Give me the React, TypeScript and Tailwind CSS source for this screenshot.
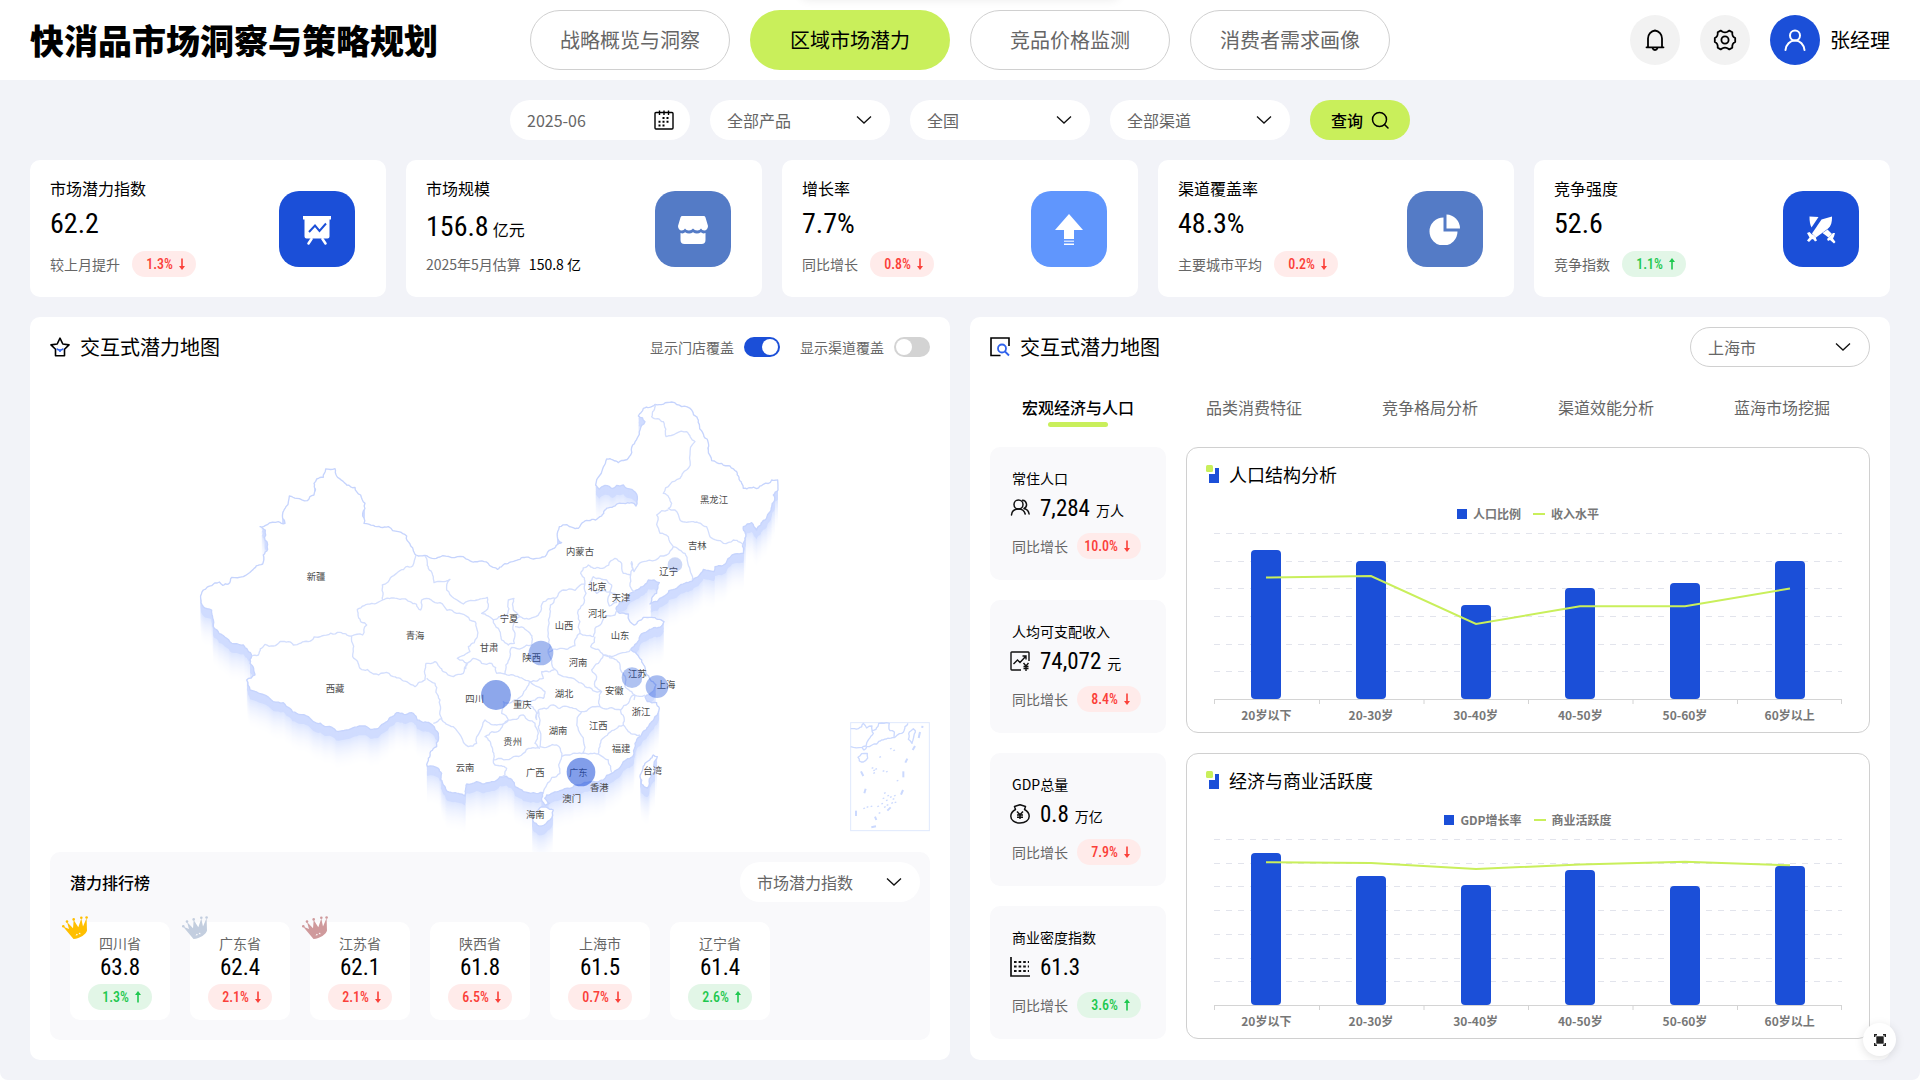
import React from "react";

const NUM = "font-['Roboto_Condensed','Roboto',sans-serif]";

/* ---------- shared pieces ---------- */

function Chevron({ className = "" }: { className?: string }) {
  return (
    <svg className={`pointer-events-none h-2 w-4 ${className}`} viewBox="0 0 16 8" fill="none" stroke="#111" strokeWidth="1.3" aria-hidden="true">
      <path d="M1 0.5 8 7 15 0.5" />
    </svg>
  );
}

function Select({ label, options, className = "" }: { label: string; options: string[]; className?: string }) {
  return (
    <div className={`grid h-10 w-[180px] items-center rounded-full bg-white ${className}`}>
      <select
        aria-label={label}
        className="col-start-1 row-start-1 h-full w-full appearance-none rounded-full bg-transparent pr-10 pl-[17px] text-base text-[#666] outline-none"
      >
        {options.map((o) => (
          <option key={o}>{o}</option>
        ))}
      </select>
      <Chevron className="col-start-1 row-start-1 mr-[18px] justify-self-end" />
    </div>
  );
}

function Badge({ value, up = false }: { value: string; up?: boolean }) {
  return (
    <span
      className={`inline-flex h-[26px] w-16 items-center justify-end gap-[6px] rounded-full pr-[11px] text-sm font-medium ${NUM} ${
        up ? "bg-[#e2f6e7] text-[#1ec84f]" : "bg-[#ffebea] text-[#fb4039]"
      }`}
    >
      {value}
      <svg className={`h-3 w-[6px] ${up ? "rotate-180" : ""}`} viewBox="0 0 6 12" aria-hidden="true">
        <path d="M2.2 0.5h1.6V8H6L3 12 0 8h2.2z" fill="currentColor" />
      </svg>
    </span>
  );
}

/* ---------- KPI cards ---------- */

const kpiIcons: Record<string, React.ReactNode> = {
  board: (
    <>
      <path d="M2 3h28v3.500h-1.500v17a2 2 0 0 1-2 2h-21a2 2 0 0 1-2-2v-17H2z" fill="#fff" />
      <path d="m8 19 6-6.500 4.500 5.500 6.500-7.500" fill="none" stroke="#1b4fd8" strokeWidth="2" />
      <path d="m10.500 26-3 4.500M21.500 26l3 4.500" stroke="#fff" strokeWidth="2.500" strokeLinecap="round" />
    </>
  ),
  store: (
    <>
      <path d="M5.500 3h21a2 2 0 0 1 2 1.400L31 13c0 2.500-1.700 4.500-3.700 4.500-1.500 0-2.500-.8-3.300-2-.8 1.200-2 2-3.700 2-1.800 0-3.300-.8-4.300-2-1 1.200-2.400 2-4.200 2-1.700 0-3-.8-3.800-2-.8 1.200-1.700 2-3.300 2C2.700 17.500 1 15.500 1 13l2.500-8.600A2 2 0 0 1 5.500 3z" fill="#fff" />
      <path d="M3.500 20c2 .8 3.600.3 4.600-.7 2.400 1.700 5.500 1.700 7.900 0 2.400 1.700 5.500 1.700 7.900 0 1 1 2.600 1.500 4.600.7v7a4 4 0 0 1-4 4h-17a4 4 0 0 1-4-4z" fill="#fff" />
    </>
  ),
  arrow: (
    <>
      <path d="M16 1 30 17h-9v9H11v-9H2z" fill="#fff" />
      <path d="M11 27.500h10V29H11z" fill="#fff" opacity=".7" />
      <path d="M11 30.500h10V32H11z" fill="#fff" />
    </>
  ),
  pie: (
    <>
      <path d="M14.500 4.500v14h14A14 14 0 1 1 14.500 4.500z" fill="#fff" />
      <path d="M17.500 1.500A14 14 0 0 1 31 15.500H17.500z" fill="#fff" />
    </>
  ),
  swords: (
    <g fill="#fff">
      <path d="M4.500 3.500 13.500 4l-7 10.500C5 12 4.500 8 4.500 3.500z" />
      <path d="M16.500 6.500 27 3.500c0 5-.5 9.500-4.500 12.500L11 24.500l-4-4z" />
      <path d="M22.500 16.500 27 21l-3.500 3.500-6-4.500z" />
      <path d="m2 20 2.500-1 2.500 2.500h1l3 3v1l1 2-2 1-1.500-2-1.500-.5-3 3-2-1.500 2.500-3zM30 20l-2 0-6 6 1 2 2-1 4 3.500 1.500-1.500-2.500-3.500 1-2z" />
    </g>
  ),
};

type Kpi = { label: string; value: string; unit?: string; note: string; change?: string; up?: boolean; noteValue?: string; icon: string; tint: string };

const kpis: Kpi[] = [
  { label: "市场潜力指数", value: "62.2", note: "较上月提升", change: "1.3%", icon: "board", tint: "bg-[#1b4fd8]" },
  { label: "市场规模", value: "156.8", unit: "亿元", note: "2025年5月估算", noteValue: "150.8 亿", icon: "store", tint: "bg-[#547bc6]" },
  { label: "增长率", value: "7.7%", note: "同比增长", change: "0.8%", icon: "arrow", tint: "bg-[#6096fd]" },
  { label: "渠道覆盖率", value: "48.3%", note: "主要城市平均", change: "0.2%", icon: "pie", tint: "bg-[#547bc6]" },
  { label: "竞争强度", value: "52.6", note: "竞争指数", change: "1.1%", up: true, icon: "swords", tint: "bg-[#1b4fd8]" },
];

function KpiCard({ k }: { k: Kpi }) {
  return (
    <article className="flex h-[137px] items-center justify-between rounded-[10px] bg-white pr-[31px] pl-5">
      <div className="flex h-full flex-col pt-4">
        <h3 className="text-base leading-6 text-black">{k.label}</h3>
        <p className={`flex h-12 items-center gap-1 text-black ${k.unit ? "pt-[6px]" : ""}`}>
          <span className={`text-[28px] leading-none ${NUM}`}>{k.value}</span>
          {k.unit && <span className="pt-1 text-base leading-6">{k.unit}</span>}
        </p>
        <p className="mt-[3px] flex h-[26px] items-center gap-3 text-sm text-[#666]">
          {k.note}
          {k.change && <Badge value={k.change} up={k.up} />}
          {k.noteValue && <span className="-ml-1 text-black">{k.noteValue}</span>}
        </p>
      </div>
      <span className={`flex size-[76px] items-center justify-center rounded-[20px] ${k.tint}`}>
        <svg className="size-8" viewBox="0 0 32 32" aria-hidden="true">
          {kpiIcons[k.icon]}
        </svg>
      </span>
    </article>
  );
}

/* ---------- map ---------- */

type Pt = [number, number];

/* Subdivides a polyline with a small repeatable jitter so borders look hand surveyed. */
function rough(raw: number[], closed = false, amp = 0.16): string {
  let pts: Pt[] = [];
  for (let i = 0; i < raw.length; i += 2) pts.push([raw[i], raw[i + 1]]);
  if (closed) pts.push(pts[0]);
  for (let pass = 0; pass < 3; pass++) {
    const out: Pt[] = [pts[0]];
    for (let i = 1; i < pts.length; i++) {
      const [ax, ay] = pts[i - 1];
      const [bx, by] = pts[i];
      const len = Math.hypot(bx - ax, by - ay);
      if (len > 9) {
        const r = Math.sin(ax * 12.9898 + by * 78.233 + ay * 3.1) * 43758.5453;
        const k = (r - Math.floor(r) - 0.5) * 2 * amp;
        out.push([(ax + bx) / 2 - (by - ay) * k, (ay + by) / 2 + (bx - ax) * k]);
      }
      out.push([bx, by]);
    }
    pts = out;
  }
  return "M" + pts.map((p) => `${p[0].toFixed(1)} ${p[1].toFixed(1)}`).join("L") + (closed ? "Z" : "");
}

const east = (raw: number[]) => raw.map((v, i) => (i % 2 ? v : v + 1140));

const mainland = [
  62, 655, 70, 630, 95, 617, 118, 606, 128, 616, 145, 612, 155, 592, 190, 590, 215, 572, 248, 552, 250, 525, 263, 508, 255, 480, 256, 450, 240, 440,
  262, 434, 295, 425, 315, 430, 308, 415, 318, 380, 328, 348, 350, 355, 382, 362, 402, 345, 402, 310, 410, 297, 430, 292, 437, 267, 465, 266, 470, 288,
  500, 315, 525, 322, 542, 345, 555, 370, 548, 400, 552, 430, 580, 436, 625, 440, 655, 455, 680, 468, 690, 492, 708, 525, 735, 526, 780, 531, 850, 530,
  885, 545, 935, 560, 952, 568, 985, 550, 1020, 538, 1060, 537, 1095, 530, 1115, 508, 1145, 488, 1132, 470, 1138, 440, 1160, 434, 1195, 445, 1225, 422,
  1265, 408, 1290, 382, 1330, 370, 1355, 368, 1368, 378, 1372, 350, 1355, 328, 1330, 315, 1310, 316, 1298, 326, 1275, 316, 1258, 328, 1247, 315, 1260, 285,
  1280, 237, 1315, 248, 1352, 225, 1358, 195, 1380, 150, 1395, 125, 1375, 108, 1390, 85, 1425, 73, 1475, 66, 1505, 80, 1535, 90, 1555, 120, 1572, 170,
  1585, 210, 1595, 242, 1625, 250, 1650, 258, 1670, 275, 1685, 310, 1690, 325, 1730, 326, 1750, 313, 1775, 300, 1793, 300, 1794, 330, 1780, 345, 1775, 380,
  1755, 420, 1730, 450, 1715, 428, 1690, 440, 1695, 480, 1690, 520, 1665, 522, 1640, 545, 1605, 560, 1602, 575, 1570, 568, 1555, 590, 1530, 605, 1490, 625,
  1450, 650, 1410, 672, 1415, 655, 1430, 640, 1438, 608, 1405, 600, 1375, 628, 1350, 640, 1340, 660, 1318, 668, 1308, 685, 1320, 700, 1345, 702, 1350, 725,
  1362, 735, 1390, 712, 1415, 712, 1452, 725, 1440, 742, 1405, 752, 1380, 768, 1370, 790, 1352, 808, 1370, 822, 1385, 840, 1398, 880, 1410, 898, 1428, 915,
  1418, 935, 1395, 950, 1402, 965, 1430, 968, 1438, 985, 1425, 1010, 1405, 1040, 1380, 1070, 1365, 1090, 1362, 1120, 1330, 1145, 1295, 1180, 1270, 1200,
  1230, 1205, 1200, 1215, 1170, 1225, 1140, 1232, 1120, 1238, 1100, 1245, 1094, 1255, 1108, 1270, 1097, 1276, 1085, 1260, 1090, 1238, 1060, 1238, 1030, 1235,
  1005, 1220, 995, 1198, 960, 1190, 935, 1205, 890, 1205, 860, 1212, 855, 1248, 835, 1240, 815, 1238, 790, 1215, 785, 1180, 775, 1165, 742, 1160, 745, 1135,
  770, 1100, 772, 1055, 750, 1030, 712, 1020, 700, 1000, 655, 998, 625, 1020, 595, 1045, 550, 1038, 500, 1050, 440, 1040, 400, 1025, 350, 1000, 310, 968,
  280, 965, 210, 930, 200, 900, 225, 885, 210, 850, 215, 828, 190, 795, 140, 775, 100, 740, 95, 690, 70, 680,
];
const hainan = [1056, 1302, 1080, 1283, 1120, 1290, 1110, 1320, 1085, 1338, 1062, 1328];
const taiwan = [1380, 1190, 1395, 1150, 1420, 1125, 1432, 1130, 1425, 1175, 1402, 1224, 1384, 1212];

const land = [mainland, hainan, taiwan].map((p) => rough(p, true)).join("");

const borders = [
  [708, 525, 698, 558, 660, 572, 625, 605, 607, 615, 608, 660],
  [608, 660, 575, 670, 532, 688, 535, 710, 560, 735, 548, 765, 515, 768, 480, 757, 425, 768, 385, 785, 340, 795, 325, 785, 280, 798, 255, 793, 235, 825, 215, 828],
  [608, 660, 650, 655, 690, 665, 722, 690, 725, 660, 780, 668, 830, 700, 885, 725, 892, 770, 865, 800, 870, 815, 832, 835, 862, 850, 857, 868],
  [515, 768, 518, 830, 540, 865, 580, 882, 640, 890, 680, 905, 705, 920, 735, 900, 738, 850, 765, 845, 790, 875, 820, 890, 850, 880, 860, 850],
  [735, 528, 745, 565, 762, 608, 810, 598, 800, 630, 850, 672, 880, 662, 922, 652, 925, 680, 905, 700, 940, 720],
  [940, 720, 975, 710, 985, 660, 1002, 655, 1000, 690, 1020, 710, 1000, 735, 1005, 760, 1003, 790, 985, 795, 965, 780, 955, 745, 940, 720],
  [1005, 740, 1050, 760, 1055, 795, 995, 802, 990, 830, 975, 882, 950, 880, 935, 850, 905, 850, 880, 835, 862, 850],
  [1020, 710, 1060, 712, 1090, 665, 1125, 655, 1110, 700, 1108, 780, 1105, 820, 1115, 850, 1125, 868, 1085, 875, 1090, 895, 1050, 905, 1000, 885, 975, 882],
  [1125, 655, 1150, 630, 1215, 612],
  east([75, 612, 78, 640, 55, 690, 60, 760, 45, 797, 0, 805, -35, 818]),
  east([75, 612, 62, 580, 85, 555, 120, 565, 165, 535, 185, 550, 190, 580, 212, 585, 210, 610, 225, 635]),
  east([88, 612, 100, 590, 140, 600, 155, 615, 150, 635, 110, 640, 90, 625, 88, 612]),
  east([150, 635, 165, 640, 170, 668, 148, 678, 145, 650, 150, 635]),
  east([60, 760, 100, 770, 105, 745, 135, 710, 165, 705, 175, 690]),
  east([105, 770, 92, 800, 130, 825, 180, 820, 212, 808]),
  east([130, 825, 115, 850, 95, 870, 110, 890, 105, 920, 125, 935]),
  east([130, 825, 170, 840, 190, 880, 195, 920, 215, 935, 225, 945, 222, 960]),
  east([-15, 868, 10, 890, 40, 895, 75, 920, 125, 935, 120, 980, 65, 995, 40, 985, 0, 985, -20, 975, -65, 990, -70, 1020]),
  east([120, 980, 160, 985, 182, 990, 205, 970, 222, 945, 255, 945]),
  east([65, 995, 55, 1050, 68, 1120, 115, 1122, 120, 1100, 145, 1060, 190, 1035, 182, 990]),
  east([190, 1035, 205, 1055, 240, 1065]),
  east([115, 1122, 145, 1140, 155, 1178]),
  [1075, 990, 1075, 1040, 1080, 1100, 1130, 1095, 1145, 1130, 1170, 1125, 1208, 1120],
  [1080, 1105, 1030, 1120, 1000, 1130, 940, 1140, 945, 1155, 980, 1165, 975, 1185, 960, 1190],
  [1145, 1130, 1140, 1180, 1100, 1215, 1090, 1238],
  [940, 1140, 935, 1100, 915, 1070, 960, 1050, 985, 1020, 1030, 1005, 1065, 1030, 1075, 1060, 1065, 1090, 1080, 1105],
  [1070, 1020, 1065, 990, 1050, 975, 1010, 960, 1030, 940, 1050, 905, 1095, 935, 1090, 955, 1050, 965],
  [1010, 960, 970, 965, 965, 1000, 985, 1020],
  [740, 895, 765, 910, 780, 960, 785, 1015, 760, 1030],
  [785, 1015, 820, 1040, 865, 1100, 890, 1090, 915, 1020, 950, 1035, 985, 1020],
  east([285, 73, 275, 110, 310, 125, 318, 170, 380, 155, 405, 185, 385, 265, 360, 295, 310, 340, 335, 370, 325, 385, 345, 390, 360, 420, 400, 425, 440, 440, 450, 470, 490, 490, 520, 480, 555, 500]),
  east([325, 390, 290, 405, 300, 460, 325, 470, 340, 500, 375, 520, 390, 570, 397, 600]),
  east([340, 500, 320, 525, 250, 545, 222, 575, 215, 545, 212, 585]),
]
  .map((b) => rough(b))
  .join("");

const places: [string, number, number][] = [
  ["新疆", 408, 589], ["西藏", 465, 926], ["青海", 705, 768], ["甘肃", 927, 803], ["宁夏", 987, 717], ["陕西", 1055, 834],
  ["山西", 1152, 738], ["四川", 884, 957], ["重庆", 1027, 974], ["湖北", 1152, 940], ["湖南", 1134, 1051], ["贵州", 998, 1085],
  ["云南", 855, 1163], ["广西", 1066, 1178], ["海南", 1066, 1303], ["澳门", 1175, 1255], ["广东", 1195, 1178], ["香港", 1258, 1222],
  ["福建", 1323, 1106], ["江西", 1255, 1037], ["浙江", 1383, 996], ["上海", 1458, 914], ["江苏", 1372, 880], ["安徽", 1303, 932],
  ["河南", 1194, 849], ["山东", 1320, 766], ["河北", 1252, 700], ["天津", 1323, 652], ["北京", 1252, 620], ["内蒙古", 1200, 515],
  ["辽宁", 1466, 575], ["吉林", 1552, 497], ["黑龙江", 1602, 358], ["台湾", 1418, 1172],
];

const bubbles: [number, number, number, number][] = [
  [1485, 554, 22, 0.22], [1083, 819, 37, 0.4], [948, 945, 45, 0.5], [1203, 1176, 43, 0.55], [1356, 893, 31, 0.35], [1431, 920, 34, 0.38],
];

/* The land casts a vertical skirt: opaque copies from the faintest and lowest up to the solid band. */
const fade = Array.from({ length: 30 }, (_, i) => {
  const t = (i + 1) / 31;
  const shade = t * t;
  return { dy: 118 - i * 3, fill: `rgb(${Math.round(255 - 35 * shade)},${Math.round(255 - 26 * shade)},255)` };
});
const skirt = Array.from({ length: 8 }, (_, i) => 28 - i * 4);

const dashes: [number, number, number, number][] = [
  [2020, 1056, 2016, 1074], [2005, 1098, 1998, 1110], [1982, 1136, 1976, 1148], [1970, 1174, 1970, 1192], [1969, 1230, 1963, 1244],
  [1932, 1282, 1922, 1292], [1874, 1342, 1888, 1339], [1828, 1292, 1828, 1308], [1857, 1226, 1853, 1240], [1843, 1174, 1850, 1188],
  [1885, 1310, 1889, 1320], [2024, 1040, 2030, 1041],
];

const islets: [number, number][] = [
  [1875, 1165], [1880, 1172], [1886, 1168], [1880, 1180], [1908, 1174], [1918, 1176], [1898, 1132], [1930, 1107], [1940, 1112], [1950, 1203],
  [1912, 1240], [1922, 1248], [1908, 1256], [1918, 1262], [1930, 1252], [1938, 1258], [1942, 1248], [1904, 1272], [1892, 1280], [1912, 1282],
  [1872, 1280], [1860, 1282], [1850, 1286], [1920, 1276], [1934, 1270], [1896, 1300], [1944, 1268],
];

function ChinaMap() {
  return (
    <svg className="block w-full" viewBox="-390 -9 2640 1425" role="img" aria-label="全国市场潜力地图">
      <defs>
        <path id="land" d={land} />
      </defs>
      {fade.map((f) => (
        <use key={f.dy} href="#land" y={f.dy} fill={f.fill} />
      ))}
      <g fill="#d0dcff">
        {skirt.map((dy) => (
          <use key={dy} href="#land" y={dy} />
        ))}
      </g>
      <use href="#land" fill="#fff" stroke="#c6d4fd" strokeWidth="4" strokeLinejoin="round" />
      <path d={borders} fill="none" stroke="#d3defd" strokeWidth="4" strokeLinejoin="round" />
      <g fill="#4a4a4a" fontSize="28" textAnchor="middle">
        {places.map(([name, x, y]) => (
          <text key={name} x={x} y={y + 10}>
            {name}
          </text>
        ))}
      </g>
      {bubbles.map(([x, y, r, o]) => (
        <circle key={x} cx={x} cy={y} r={r} fill="#1b4fd8" fillOpacity={o} />
      ))}
      <rect x="2012" y="1028" width="236" height="324" fill="none" stroke="#dfe9fd" strokeWidth="3" />
      <g transform="translate(200 0)" fill="none" stroke="#cbd9fe" strokeWidth="4" strokeLinejoin="round">
        <path d={rough([1812, 1046, 1835, 1046, 1850, 1030, 1860, 1044, 1876, 1038, 1880, 1060, 1866, 1078, 1858, 1098, 1846, 1102, 1812, 1100])} />
        <path d={rough([1876, 1052, 1888, 1048, 1896, 1030, 1928, 1030, 1930, 1052, 1943, 1056, 1942, 1073, 1905, 1080, 1890, 1092, 1860, 1100, 1852, 1110, 1846, 1102])} />
        <path d={rough([1943, 1073, 1965, 1060, 1975, 1040, 1984, 1030])} />
        <path d={rough([1834, 1132, 1845, 1121, 1862, 1120, 1863, 1134, 1850, 1146, 1838, 1143], true)} />
        <path d={rough([1985, 1078, 1988, 1056, 2000, 1046, 2006, 1052, 1996, 1090], true)} />
        {dashes.map(([a, b, c, d]) => (
          <path key={`${a}-${b}`} d={`M${a} ${b}L${c} ${d}`} strokeWidth="6" />
        ))}
        {islets.map(([x, y]) => (
          <path key={`${x}-${y}`} d={`M${x} ${y}l5 -2`} />
        ))}
      </g>
    </svg>
  );
}

/* ---------- ranking ---------- */

const ranking = [
  { name: "四川省", value: "63.8", change: "1.3%", up: true, crown: "#ffbf00" },
  { name: "广东省", value: "62.4", change: "2.1%", crown: "#c3cedf" },
  { name: "江苏省", value: "62.1", change: "2.1%", crown: "#cf9a9c" },
  { name: "陕西省", value: "61.8", change: "6.5%" },
  { name: "上海市", value: "61.5", change: "0.7%" },
  { name: "辽宁省", value: "61.4", change: "2.6%", up: true },
];

function Crown({ color }: { color: string }) {
  return (
    <svg className="absolute -top-[6px] -left-2 h-6 w-[26px]" viewBox="0 0 26 24" fill={color} aria-hidden="true">
      <path d="M1 10.500 7 13 5 6l6 6.200L11.700 4l4.600 7.300L19.300 2.500l1.700 8 3.600-8.500.4 12.500c-.5 3.500-7 8-13.500 8.500z" />
      <circle cx="1.300" cy="10.300" r="1.300" />
      <circle cx="5" cy="5.600" r="1.300" />
      <circle cx="11.700" cy="3.400" r="1.300" />
      <circle cx="19.300" cy="1.800" r="1.300" />
      <circle cx="24.600" cy="1.500" r="1.300" />
      <path d="m13.500 19.500 1.300-1.800 1.200 1.300zM16.500 18l1.500-1.600.6 1.800z" fill="#fff" />
    </svg>
  );
}

/* ---------- statistics ---------- */

const statIcons: Record<string, React.ReactNode> = {
  people: (
    <g fill="none" stroke="#111" strokeWidth="1.500" strokeLinecap="round">
      <circle cx="8.500" cy="6.500" r="4.500" />
      <path d="M1.500 17c.3-3.500 3-6 7-6 3.500 0 6 2 6.700 5M12.500 2.300a4.300 4.300 0 0 1 1.500 8.200M14.500 10.800c2.600.6 4.200 2.600 4.600 5.200" />
    </g>
  ),
  income: (
    <g fill="none" stroke="#111" strokeWidth="1.400">
      <path d="M19 10V1.700a.7.7 0 0 0-.7-.7H1.700a.7.700 0 0 0-.7.7v16.600c0 .4.300.7.7.7H11" />
      <path d="m3.500 13 4-4 2.500 2.500 6-6.500M12.500 5H16v3.500" />
      <path d="m13.500 12 2.500 3 2.500-3M16 15v5M13.500 15.500h5M13.500 17.500h5" />
    </g>
  ),
  money: (
    <g fill="none" stroke="#111" strokeWidth="1.500" strokeLinejoin="round">
      <path d="M5.500 5.500 4.500 2.500 7.500 1.500 10 .8l2.500.7 3 1-1 3c3 1.600 4.700 4 4.700 6.700 0 4.200-4 6.800-9.200 6.800S.8 16.400.8 12.200c0-2.700 1.700-5.100 4.700-6.700z" />
      <path d="m7 7.500 3 3.200 3-3.200M10 10.700V15M7 11h6M7 13.200h6" />
    </g>
  ),
  density: (
    <g fill="none" stroke="#111">
      <path d="M1 0v19h19" strokeWidth="1.700" />
      <path d="M4 5h15M4 9.500h15M4 14h15" strokeWidth="2.200" strokeDasharray="2.600 2" />
    </g>
  ),
};

const stats = [
  { label: "常住人口", value: "7,284", unit: "万人", change: "10.0%", icon: "people" },
  { label: "人均可支配收入", value: "74,072", unit: "元", change: "8.4%", icon: "income" },
  { label: "GDP总量", value: "0.8", unit: "万亿", change: "7.9%", icon: "money" },
  { label: "商业密度指数", value: "61.3", unit: "", change: "3.6%", up: true, icon: "density" },
];

/* ---------- charts ---------- */

type ChartProps = { title: string; barName: string; lineName: string; grid: number[]; bars: number[]; line: number[] };
const ages = ["20岁以下", "20-30岁", "30-40岁", "40-50岁", "50-60岁", "60岁以上"];
const centers = [52, 157, 262, 366, 471, 576];

function ChartCard({ title, barName, lineName, grid, bars, line }: ChartProps) {
  return (
    <section className="flex flex-col rounded-xl border border-[#d0d0d0] bg-white pb-[7px]">
      <h3 className="mt-3 flex h-7 items-center gap-[9px] pl-[19px] text-lg text-black">
        <svg className="h-[18px] w-[14px]" viewBox="0 0 14 18" aria-hidden="true">
          <path d="M9 3h4v15H3V9h6z" fill="#1b4fd8" />
          <rect width="7" height="7" rx="1.500" fill="#c9ef5b" />
        </svg>
        {title}
      </h3>
      <div className="mt-[17px] flex h-[18px] items-center justify-center gap-3 text-xs font-semibold text-[#777]">
        <span className="flex items-center gap-[6px]">
          <i className="size-[10px] bg-[#1b4fd8]" />
          {barName}
        </span>
        <span className="flex items-center gap-[6px]">
          <i className="h-[2px] w-3 bg-[#c9ef5b]" />
          {lineName}
        </span>
      </div>
      <svg className="mx-[27px] mt-[6px] block" viewBox="0 0 628 176" role="img" aria-label={title}>
        {grid.map((y) => (
          <path key={y} d={`M0 ${y + 0.5}H628`} stroke="#e2e4ec" strokeDasharray="6 6" />
        ))}
        {bars.map((y, i) => (
          <rect key={i} x={centers[i] - 15} y={y} width="30" height={170 - y} rx="4" fill="#1b4fd8" />
        ))}
        <path d="M0 170.500H628M.5 170v5M105.500 170v5M210 170v5M314.500 170v5M419 170v5M523.500 170v5M627.500 170v5" stroke="#d4d4d4" />
        <polyline points={line.map((y, i) => `${centers[i]},${y}`).join(" ")} fill="none" stroke="#c9ef5b" strokeWidth="2" />
      </svg>
      <div className="mx-[27px] grid grid-cols-6 text-center text-xs leading-5 font-semibold text-[#777]">
        {ages.map((a) => (
          <span key={a}>{a}</span>
        ))}
      </div>
    </section>
  );
}

/* ---------- page ---------- */

const navItems = ["战略概览与洞察", "区域市场潜力", "竞品价格监测", "消费者需求画像"];
const tabs = ["宏观经济与人口", "品类消费特征", "竞争格局分析", "渠道效能分析", "蓝海市场挖掘"];

function Toggle({ label, on = false }: { label: string; on?: boolean }) {
  return (
    <label className="flex items-center gap-[10px] text-sm text-[#666]">
      {label}
      <input
        type="checkbox"
        role="switch"
        defaultChecked={on}
        className="relative h-5 w-9 appearance-none rounded-full bg-[#d3d3d3] before:absolute before:top-[2px] before:left-[2px] before:size-4 before:rounded-full before:bg-white checked:bg-[#1b4fd8] checked:before:left-[18px]"
      />
    </label>
  );
}

export default function App() {
  return (
    <div className="relative min-h-screen overflow-hidden rounded-b-lg bg-[#f2f3f8] pb-5 font-['Noto_Sans_CJK_SC',sans-serif]">
      <header className="grid h-20 grid-cols-[1fr_auto_1fr] items-center bg-white px-[30px]">
        <h1 className="text-[34px] leading-none font-black text-black">快消品市场洞察与策略规划</h1>
        <nav className="flex gap-5">
          {navItems.map((n, i) => (
            <button
              key={n}
              className={`h-[60px] w-[200px] rounded-full text-xl ${i === 1 ? "bg-[#c9ef5b] text-black" : "border border-[#d0d0d0] text-[#666]"}`}
            >
              {n}
            </button>
          ))}
        </nav>
        <div className="flex items-center justify-end gap-5">
          <button aria-label="通知" className="flex size-[50px] items-center justify-center rounded-full bg-[#f2f2f2]">
            <svg className="size-6" viewBox="0 0 24 24" fill="none" stroke="#000" strokeWidth="1.800" strokeLinejoin="round" strokeLinecap="round">
              <path d="M3.500 19.300h17M5 19V10.500C5 6.500 8 3 12 2.500c4 .5 7 4 7 8V19M9.500 20c.5 1.600 1.300 2 2.500 2s2-.4 2.500-2" />
            </svg>
          </button>
          <button aria-label="设置" className="flex size-[50px] items-center justify-center rounded-full bg-[#f2f2f2]">
            <svg className="size-6" viewBox="0 0 24 24" fill="none" stroke="#000" strokeWidth="1.800" strokeLinejoin="round">
              <path d="M9.500 3.800c1.600.8 3.400.8 5 0l1.800-1.200 3 1.700c-.3 2.400.6 4.700 2.900 5.700v4c-2.300 1-3.200 3.300-2.900 5.700l-3 1.700-1.800-1.200c-1.600-.8-3.400-.8-5 0l-1.800 1.200-3-1.700C5 17.300 4.100 15 1.800 14v-4C4.100 9 5 6.700 4.700 4.300l3-1.700z" />
              <circle cx="12" cy="12" r="3.600" />
            </svg>
          </button>
          <div className="flex items-center gap-[10px]">
            <span className="flex size-[50px] items-center justify-center rounded-full bg-[#1b4fd8]">
              <svg className="size-6" viewBox="0 0 24 24" fill="none" stroke="#fff" strokeWidth="2" strokeLinecap="round">
                <circle cx="12" cy="7.500" r="5" />
                <path d="M2.500 22c.5-5.500 4.500-9.500 9.500-9.500s9 4 9.500 9.500" />
              </svg>
            </span>
            <span className="text-xl text-black">张经理</span>
          </div>
        </div>
      </header>
      <div className="absolute -top-5 left-1/2 h-5 w-80 -translate-x-1/2 rounded-lg shadow-[0_0_10px_rgba(0,0,0,0.08)]" />

      <form className="mt-5 flex justify-center gap-5" onSubmit={(e) => e.preventDefault()}>
        <div className="flex h-10 w-[180px] items-center rounded-full bg-white pr-4 pl-[17px]">
          <input aria-label="月份" defaultValue="2025-06" className="w-full min-w-0 bg-transparent text-base text-[#666] outline-none" />
          <svg className="size-5 shrink-0" viewBox="0 0 20 20" fill="none" stroke="#000" strokeWidth="1.400" aria-hidden="true">
            <rect x="1" y="2.500" width="18" height="16.500" rx="1" />
            <path d="M5.500 0.500V5M14.500 0.500V5M10 0.500V5" />
            <path d="M8.500 8h8M4.500 11.800h12M4.500 15.500h8" strokeWidth="2" strokeDasharray="2 2" />
          </svg>
        </div>
        <Select label="产品" options={["全部产品"]} />
        <Select label="地区" options={["全国"]} />
        <Select label="渠道" options={["全部渠道"]} />
        <button className="flex h-10 w-[100px] items-center justify-center gap-2 rounded-full bg-[#c9ef5b] text-base font-medium text-black">
          查询
          <svg className="size-[18px]" viewBox="0 0 18 18" fill="none" stroke="#000" strokeWidth="1.500" strokeLinecap="round" aria-hidden="true">
            <circle cx="8.500" cy="8.500" r="7" />
            <path d="m13.500 13.500 3.500 3.500" />
          </svg>
        </button>
      </form>

      <section className="mt-5 grid grid-cols-5 gap-5 px-[30px]">
        {kpis.map((k) => (
          <KpiCard key={k.label} k={k} />
        ))}
      </section>

      <main className="mt-5 grid grid-cols-2 gap-5 px-[30px]">
        <section className="flex flex-col rounded-[10px] bg-white px-5 pb-5">
          <div className="flex h-[60px] items-center justify-between">
            <h2 className="flex items-center gap-[10px] text-xl leading-7 text-black">
              <svg className="size-5" viewBox="0 0 20 20" fill="none" strokeWidth="1.600" strokeLinejoin="round" aria-hidden="true">
                <path d="M10 1.200 12.800 7l6.200.9-4.500 4.400V18.800H5.500V12.300L1 7.900 7.200 7z" stroke="#000" />
                <path d="M7 11.500c.5 2 5.500 2 6 0M10 13v2" stroke="#2f62ec" />
              </svg>
              交互式潜力地图
            </h2>
            <div className="flex gap-5">
              <Toggle label="显示门店覆盖" on />
              <Toggle label="显示渠道覆盖" />
            </div>
          </div>
          <ChinaMap />
          <div className="min-h-[188px] rounded-[10px] bg-[#f9f9fb] px-5">
            <div className="-mr-[10px] flex h-[60px] items-center justify-between">
              <h3 className="text-base font-medium text-black">潜力排行榜</h3>
              <Select label="排行指标" options={["市场潜力指数"]} />
            </div>
            <ol className="mt-[10px] flex gap-5">
              {ranking.map((r) => (
                <li key={r.name} className="relative flex h-[98px] w-[100px] flex-col items-center rounded-[10px] bg-white pt-[11px]">
                  {r.crown && <Crown color={r.crown} />}
                  <span className="text-sm leading-5 text-[#666]">{r.name}</span>
                  <span className={`mb-[3px] flex h-7 items-center text-[23px] leading-none text-black ${NUM}`}>{r.value}</span>
                  <Badge value={r.change} up={r.up} />
                </li>
              ))}
            </ol>
          </div>
        </section>

        <section className="flex flex-col rounded-[10px] bg-white px-5 pb-[21px]">
          <div className="flex h-[60px] items-center justify-between">
            <h2 className="flex items-center gap-[10px] text-xl leading-7 text-black">
              <svg className="size-5" viewBox="0 0 20 20" fill="none" strokeWidth="1.600" aria-hidden="true">
                <path d="M19 9V1H1v17.500h9.500" stroke="#000" />
                <circle cx="12" cy="11.500" r="4" stroke="#2f62ec" strokeWidth="1.800" />
                <path d="m15 14.500 4 4" stroke="#2f62ec" strokeWidth="1.800" />
              </svg>
              交互式潜力地图
            </h2>
            <Select label="城市" options={["上海市"]} className="border border-[#d0d0d0]" />
          </div>
          <div role="tablist" className="mt-[18px] grid h-8 grid-cols-5">
            {tabs.map((t, i) => (
              <button
                key={t}
                role="tab"
                aria-selected={i === 0}
                className={`flex flex-col items-center gap-[3px] text-base leading-6 ${i === 0 ? "font-medium text-black" : "text-[#666]"}`}
              >
                {t}
                {i === 0 && <span className="h-[5px] w-[60px] rounded-full bg-[#c9ef5b]" />}
              </button>
            ))}
          </div>
          <div className="mt-5 grid flex-1 grid-cols-[176fr_684fr] gap-5">
            <div className="grid grid-rows-4 gap-5">
              {stats.map((s) => (
                <article key={s.label} className="flex flex-col rounded-[10px] bg-[#f9f9fb] pt-[21px] pl-[22px]">
                  <h4 className="text-sm leading-5 text-black">{s.label}</h4>
                  <p className="-ml-[2px] flex h-10 items-center text-black">
                    <svg className="size-5" viewBox="0 0 20 20" aria-hidden="true">
                      {statIcons[s.icon]}
                    </svg>
                    <span className={`ml-[10px] text-[23px] leading-none ${NUM}`}>{s.value}</span>
                    <span className="ml-[6px] pt-1 text-sm">{s.unit}</span>
                  </p>
                  <p className="mt-[5px] flex items-center gap-[9px] text-sm text-[#666]">
                    同比增长
                    <Badge value={s.change} up={s.up} />
                  </p>
                </article>
              ))}
            </div>
            <div className="grid grid-rows-2 gap-5">
              <ChartCard
                title="人口结构分析"
                barName="人口比例"
                lineName="收入水平"
                grid={[4, 32, 59, 87, 115, 142]}
                bars={[21, 32, 76, 59, 54, 32]}
                line={[48.5, 47, 95, 77.3, 77.3, 59.5]}
              />
              <ChartCard
                title="经济与商业活跃度"
                barName="GDP增长率"
                lineName="商业活跃度"
                grid={[4, 28, 51, 75, 99, 123, 146]}
                bars={[18, 41, 50, 35, 51, 31]}
                line={[27.3, 28, 34, 29.5, 26.7, 30.3]}
              />
            </div>
          </div>
        </section>
      </main>

      <button aria-label="全屏" className="fixed right-6 bottom-6 flex size-[33px] items-center justify-center rounded-full bg-white shadow-[0_2px_10px_rgba(0,0,0,0.12)]">
        <svg className="size-3" viewBox="0 0 12 12" fill="none" stroke="#222" strokeWidth="1.400" aria-hidden="true">
          <path d="M.7 3V.7H3M9 .7h2.300V3M11.300 9v2.300H9M3 11.300H.7V9" />
          <rect x="3" y="3" width="6" height="6" fill="#222" />
        </svg>
      </button>
    </div>
  );
}
